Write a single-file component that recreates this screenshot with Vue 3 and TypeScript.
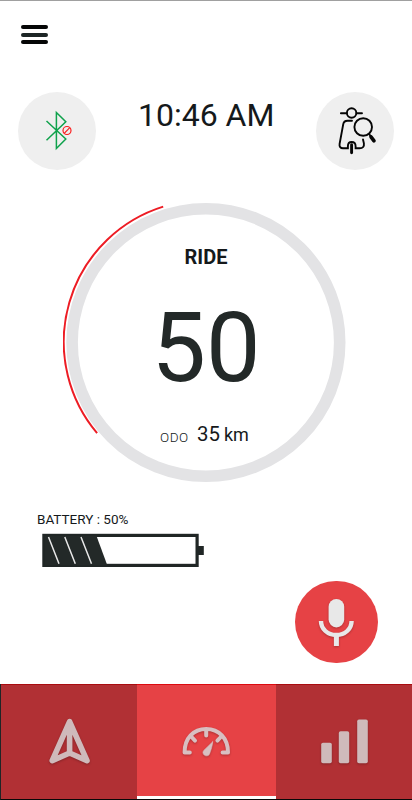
<script setup lang="ts">
import { ref } from 'vue'

type Tab = 'navigate' | 'dashboard' | 'stats'

const activeTab = ref<Tab>('dashboard')
const time = ref('10:46 AM')
const mode = ref('RIDE')
const speed = ref(50)
const odometer = ref(35)
const battery = ref(50)
</script>

<template>
  <div class="screen">
    <header class="topbar">
      <button class="menu" aria-label="Menu">
        <span class="menu-line"></span>
        <span class="menu-line mid"></span>
        <span class="menu-line"></span>
      </button>
    </header>

    <section class="status">
      <button class="round" aria-label="Bluetooth">
        <svg viewBox="0 0 78 78" width="78" height="78" fill="none">
          <path d="M28.5 29 L47.8 47 L38.4 56.5 V20.5 L47.8 29.7 L28.5 48.2" stroke="#0fa24c" stroke-width="1.5" />
          <circle cx="49" cy="38.5" r="4" stroke="#fb1c1c" stroke-width="1.2" />
          <path d="M46.2 41.3 L51.8 35.7" stroke="#fb1c1c" stroke-width="1.2" />
        </svg>
      </button>
      <div class="time">{{ time }}</div>
      <button class="round" aria-label="Find scooter">
        <svg viewBox="0 0 78 78" width="78" height="78" fill="none" stroke="#050505" stroke-width="1.9" stroke-linecap="round">
          <circle cx="35.6" cy="21" r="4.7" />
          <path d="M24.9 21.3 H30.5 M40.7 21.3 H46" />
          <path d="M36 28.8 H31.5 C29 28.8 27.6 30 27.2 32.3 L23.6 51.8 C23.1 54.7 24.5 56.3 27 56.3 H31.9 V54.2 C31.9 51.7 33.5 50 35.6 50 C38 50 39.6 51.8 39.6 54.2 V56.3 H43.5 C47 56.3 48.3 54.5 47.9 51.3 L47 47.5" />
          <path d="M35.6 52.8 V60.8" stroke-width="2.9" />
          <circle cx="47.2" cy="35" r="8.8" />
          <path d="M53 42 L55 44.3" />
          <path d="M55 44.8 L58 48.8" stroke-width="3.6" />
        </svg>
      </button>
    </section>

    <section class="gauge">
      <svg class="dial" viewBox="0 0 286 286" width="286" height="286" fill="none">
        <circle cx="142.9" cy="143.5" r="133.8" stroke="#e3e3e5" stroke-width="11.6" />
        <path d="M34.1 234.2 A141.7 141.7 0 0 1 100.2 7.6" stroke="#ed1c24" stroke-width="2" />
      </svg>
      <div class="readout">
        <div class="mode">{{ mode }}</div>
        <div class="speed">{{ speed }}</div>
        <div class="odo">
          <span class="odo-label">ODO</span>
          <span class="odo-value">{{ odometer }}</span>
          <span class="odo-unit">km</span>
        </div>
      </div>
    </section>

    <section class="battery">
      <div class="battery-label">BATTERY : {{ battery }}%</div>
      <svg class="battery-icon" viewBox="0 0 162 34" width="162" height="34">
        <rect x="1.9" y="2.4" width="153.2" height="30" fill="#fff" stroke="#202625" stroke-width="3.2" />
        <path d="M3 3 H54.5 L65.2 32 H3 Z" fill="#232928" />
        <path d="M6.5 4 L17 30.8 M22.8 4 L33.3 30.8 M39 4 L49.5 30.8" stroke="#e8e8e8" stroke-width="1.5" />
        <rect x="156" y="13" width="5.8" height="9" fill="#202625" />
      </svg>
    </section>

    <div class="voice">
      <button class="mic" aria-label="Voice command">
        <svg viewBox="0 0 82 82" width="82" height="82" fill="none">
          <g class="lifted">
            <rect x="33.6" y="18" width="15.6" height="28.4" rx="7.8" fill="#e8e8e8" />
            <path d="M26 40 C26 48 32.6 54 41.3 54 C50 54 56.6 48 56.6 40" stroke="#e8e8e8" stroke-width="4.4" />
            <path d="M41.4 53 V65" stroke="#e8e8e8" stroke-width="5" />
          </g>
        </svg>
      </button>
    </div>

    <nav class="tabs">
      <button class="tab" :class="{ active: activeTab === 'navigate' }" aria-label="Navigate" @click="activeTab = 'navigate'">
        <svg class="lifted" viewBox="0 0 48 52" width="48" height="52" fill="none">
          <path d="M24.6 5.6 L42 44.7 L24.6 37 L7.2 44.7 Z M24.6 7 V37" stroke="#cfbabb" stroke-width="5.6" stroke-linejoin="round" />
          <path d="M24.6 6 L19.4 17 H29.8 Z" fill="#cfbabb" />
        </svg>
      </button>
      <button class="tab" :class="{ active: activeTab === 'dashboard' }" aria-label="Dashboard" @click="activeTab = 'dashboard'">
        <svg class="lifted" viewBox="0 0 52 34" width="52" height="34" fill="none" stroke="#d8bfc1" stroke-width="4" stroke-linecap="round" stroke-linejoin="round">
          <path d="M8.8 28.4 H3.6 C3.6 14.2 12.4 5 25.2 5 C38 5 47 14.2 47 28.4 H41.6" />
          <path d="M25.2 6 V11.6 M10.6 13 L14 16.6 M39.8 13 L36.4 16.6" />
          <path d="M31.7 17.8 L22.8 26.4 C20 29.8 25.1 34.2 28.3 30.4 C29.8 27 31.7 20.6 31.7 17.8 Z" stroke-width="0.6" fill="#d8bfc1" />
        </svg>
      </button>
      <button class="tab" :class="{ active: activeTab === 'stats' }" aria-label="Statistics" @click="activeTab = 'stats'">
        <svg class="lifted" viewBox="0 0 48 46" width="48" height="46" fill="#cfbabb">
          <rect x="1.2" y="23.8" width="10.6" height="20.5" rx="1.8" />
          <rect x="18.8" y="12.3" width="10.4" height="32" rx="1.8" />
          <rect x="37.2" y="0.5" width="10.6" height="43.8" rx="1.8" />
        </svg>
      </button>
    </nav>
  </div>
</template>

<style>
body {
  background: #fff;
}
</style>

<style scoped>
.screen {
  box-sizing: border-box;
  width: 412px;
  height: 800px;
  display: flex;
  flex-direction: column;
  overflow: hidden;
  border-top: 1px solid #a0a0a0;
  background: #fff;
  color: #15191b;
  font-family: Roboto, sans-serif;
}

button {
  display: block;
  margin: 0;
  padding: 0;
  border: 0;
  background: none;
  font: inherit;
}

svg {
  display: block;
}

.topbar {
  height: 91.3px;
  box-sizing: border-box;
  padding: 24px 21px 0;
}

.menu {
  display: flex;
  flex-direction: column;
  gap: 3.7px;
  width: 27px;
}

.menu-line {
  height: 4px;
  border-radius: 2px;
  background: #050606;
}

.menu-line.mid {
  background: #1d2626;
}

.status {
  display: flex;
  justify-content: space-between;
  height: 78px;
  padding: 0 18px 0 18.4px;
}

.round {
  width: 78px;
  height: 78px;
  border-radius: 50%;
  background: #efefef;
}

.time {
  padding-top: 7px;
  font-size: 32px;
  line-height: 32px;
  white-space: nowrap;
}

.gauge {
  display: grid;
  width: 286px;
  height: 286px;
  margin: 28.7px 0 0 63px;
}

.dial,
.readout {
  grid-area: 1 / 1;
}

.readout {
  display: flex;
  flex-direction: column;
  align-items: center;
  padding-top: 48px;
}

.mode {
  font-size: 20px;
  line-height: 20px;
  font-weight: 700;
}

.speed {
  margin-top: 32.6px;
  font-size: 97px;
  line-height: 97px;
  color: #232928;
}

.odo {
  display: flex;
  align-items: baseline;
  margin: 27.4px 3px 0 0;
  line-height: 20px;
}

.odo-label {
  margin-right: 8.6px;
  font-size: 13.5px;
  font-weight: 300;
  letter-spacing: 0.4px;
  position: relative;
  top: 1px;
}

.odo-value {
  margin-right: 4px;
  font-size: 20.4px;
}

.odo-unit {
  font-size: 18px;
}

.battery {
  display: flex;
  flex-direction: column;
  gap: 6px;
  padding: 26px 0 0 37px;
}

.battery-label {
  font-size: 13.5px;
  line-height: 16px;
}

.battery-icon {
  margin-left: 5px;
}

.voice {
  display: flex;
  justify-content: flex-end;
  padding: 14px 34.4px 0 0;
}

.mic {
  width: 82.4px;
  height: 82.4px;
  border-radius: 50%;
  background: #e64245;
}

.lifted {
  filter: drop-shadow(0 1px 1px rgba(0, 0, 0, 0.25));
}

.tabs {
  display: grid;
  grid-template-columns: 136.4px 138.5px 1fr;
  box-sizing: border-box;
  height: 116px;
  margin-top: auto;
  border-left: 1px solid #202526;
  border-bottom: 1.5px solid #080808;
}

.tab {
  display: flex;
  align-items: center;
  justify-content: center;
  border-top: 1px solid #a90c10;
  background: #b13034;
}

.tab.active {
  border-bottom: 3px solid #fff;
  border-top-color: #dc0b10;
  background: #e64245;
}
</style>
